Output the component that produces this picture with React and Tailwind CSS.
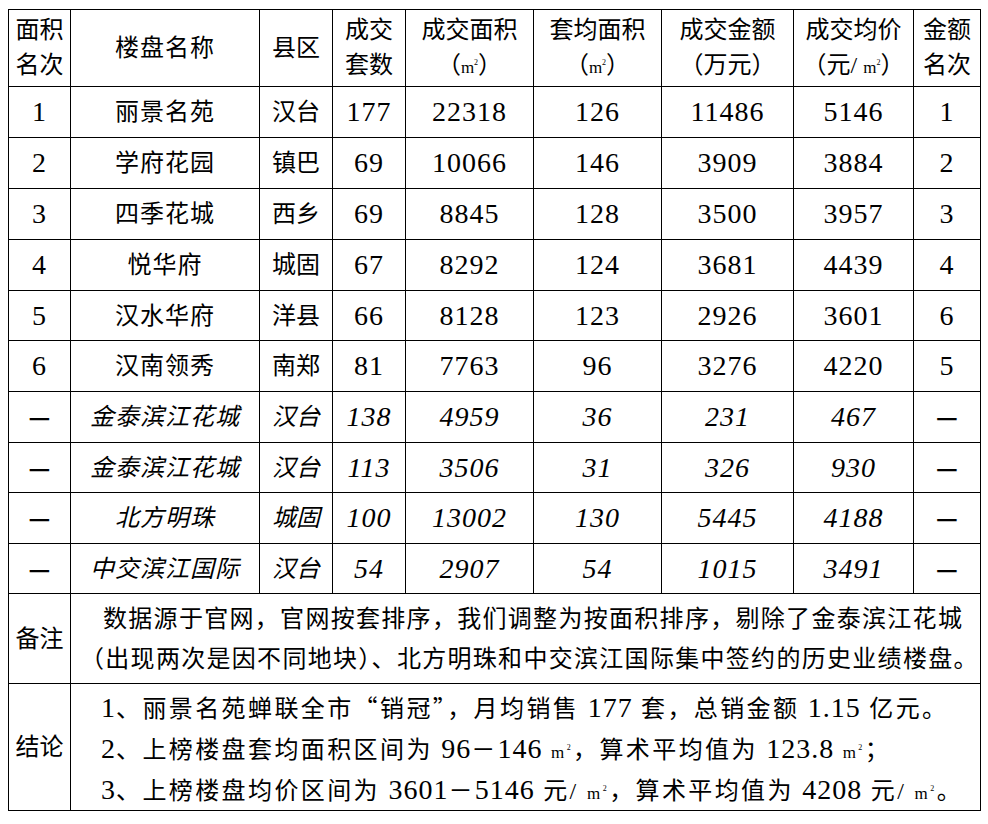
import React from "react";

const rows = [
  { rank: "1", name: "丽景名苑", area: "汉台", sets: "177", total: "22318", avg: "126", money: "11486", price: "5146", mrank: "1" },
  { rank: "2", name: "学府花园", area: "镇巴", sets: "69", total: "10066", avg: "146", money: "3909", price: "3884", mrank: "2" },
  { rank: "3", name: "四季花城", area: "西乡", sets: "69", total: "8845", avg: "128", money: "3500", price: "3957", mrank: "3" },
  { rank: "4", name: "悦华府", area: "城固", sets: "67", total: "8292", avg: "124", money: "3681", price: "4439", mrank: "4" },
  { rank: "5", name: "汉水华府", area: "洋县", sets: "66", total: "8128", avg: "123", money: "2926", price: "3601", mrank: "6" },
  { rank: "6", name: "汉南领秀", area: "南郑", sets: "81", total: "7763", avg: "96", money: "3276", price: "4220", mrank: "5" },
  { rank: "—", name: "金泰滨江花城", area: "汉台", sets: "138", total: "4959", avg: "36", money: "231", price: "467", mrank: "—", italic: true },
  { rank: "—", name: "金泰滨江花城", area: "汉台", sets: "113", total: "3506", avg: "31", money: "326", price: "930", mrank: "—", italic: true },
  { rank: "—", name: "北方明珠", area: "城固", sets: "100", total: "13002", avg: "130", money: "5445", price: "4188", mrank: "—", italic: true },
  { rank: "—", name: "中交滨江国际", area: "汉台", sets: "54", total: "2907", avg: "54", money: "1015", price: "3491", mrank: "—", italic: true },
];

const heights = ["h-[51px]", "h-[51px]", "h-[51px]", "h-[51px]", "h-[50px]", "h-[51px]", "h-[51px]", "h-[50px]", "h-[51px]", "h-[50px]"];

const cell = "border border-black text-center align-middle p-0";

function Sqm() {
  return (
    <span className="font-['Liberation_Serif',serif] text-[17px] leading-none">
      m<sup className="text-[8px] leading-none -top-[8px]">2</sup>
    </span>
  );
}

function Num({ children }) {
  return <span className="font-['Liberation_Serif',serif] text-[28px] leading-none tracking-[1px]">{children}</span>;
}

function Cjk({ children }) {
  return <span className="font-['Noto_Sans_CJK_SC',sans-serif]">{children}</span>;
}

function Dash() {
  return <span className="font-['Noto_Sans_CJK_SC',sans-serif] font-bold not-italic text-[24px]">—</span>;
}

export default function App() {
  const numCls = "font-['Liberation_Serif',serif] text-[28px] tracking-[1px]";
  return (
    <div className="bg-white w-[988px] h-[824px] pt-[9px] pl-[8px] text-black font-['Liberation_Serif','Noto_Sans_CJK_SC',serif]">
      <table className="table-fixed border-collapse w-[972px] text-[24px]">
        <colgroup>
          <col className="w-[62px]" />
          <col className="w-[189px]" />
          <col className="w-[73px]" />
          <col className="w-[73px]" />
          <col className="w-[128px]" />
          <col className="w-[128px]" />
          <col className="w-[132px]" />
          <col className="w-[120px]" />
          <col className="w-[67px]" />
        </colgroup>
        <thead>
          <tr className="h-[77px] leading-[35px]">
            <th className={`${cell} font-normal`}>面积<br />名次</th>
            <th className={`${cell} font-normal tracking-[1px]`}>楼盘名称</th>
            <th className={`${cell} font-normal`}>县区</th>
            <th className={`${cell} font-normal`}>成交<br />套数</th>
            <th className={`${cell} font-normal`}>成交面积<br />（<Sqm />）</th>
            <th className={`${cell} font-normal`}>套均面积<br />（<Sqm />）</th>
            <th className={`${cell} font-normal`}>成交金额<br />（万元）</th>
            <th className={`${cell} font-normal`}>成交均价<br />（元/ <Sqm />）</th>
            <th className={`${cell} font-normal`}>金额<br />名次</th>
          </tr>
        </thead>
        <tbody>
          {rows.map((r, i) => (
            <tr key={i} className={`${heights[i]} leading-none ${r.italic ? "italic" : ""}`}>
              <td className={cell}>{r.rank === "—" ? <Dash /> : <span className={numCls}>{r.rank}</span>}</td>
              <td className={`${cell} tracking-[1px]`}>{r.name}</td>
              <td className={cell}>{r.area}</td>
              <td className={cell}><span className={numCls}>{r.sets}</span></td>
              <td className={cell}><span className={numCls}>{r.total}</span></td>
              <td className={cell}><span className={numCls}>{r.avg}</span></td>
              <td className={cell}><span className={numCls}>{r.money}</span></td>
              <td className={cell}><span className={numCls}>{r.price}</span></td>
              <td className={cell}>{r.mrank === "—" ? <Dash /> : <span className={numCls}>{r.mrank}</span>}</td>
            </tr>
          ))}
          <tr className="h-[90px]">
            <td className={cell}>备注</td>
            <td colSpan={8} className="border border-black p-0 pl-[9px] text-left align-middle">
              <div className="leading-[40px] tracking-[1.3px] whitespace-nowrap">
                <span className="pl-[23px]">数据源于官网，官网按套排序，我们调整为按面积排序，剔除了金泰滨江花城</span>
                <br />
                （出现两次是因不同地块）、北方明珠和中交滨江国际集中签约的历史业绩楼盘。
              </div>
            </td>
          </tr>
          <tr className="h-[127px]">
            <td className={cell}>结论</td>
            <td colSpan={8} className="border border-black p-0 pl-[30px] text-left align-middle">
              <div className="leading-[41px] tracking-[2.4px] whitespace-nowrap">
                <div className="h-[41px]"><Num>1</Num>、丽景名苑蝉联全市<Cjk>“销冠”</Cjk>，月均销售 <Num>177</Num> 套，总销金额 <Num>1.15</Num> 亿元。</div>
                <div className="h-[41px]"><Num>2</Num>、上榜楼盘套均面积区间为 <Num>96</Num><Cjk>－</Cjk><Num>146</Num> <Sqm />，算术平均值为 <Num>123.8</Num> <Sqm />；</div>
                <div className="h-[41px]"><Num>3</Num>、上榜楼盘均价区间为 <Num>3601</Num><Cjk>－</Cjk><Num>5146</Num> 元/ <Sqm />，算术平均值为 <Num>4208</Num> 元/ <Sqm />。</div>
              </div>
            </td>
          </tr>
        </tbody>
      </table>
    </div>
  );
}
